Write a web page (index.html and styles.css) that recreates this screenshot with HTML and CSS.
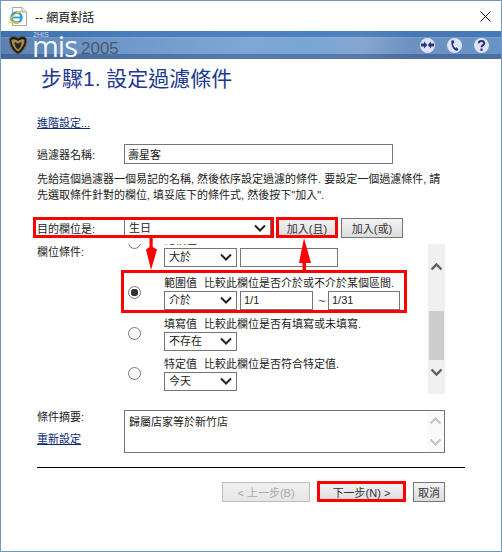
FILE: index.html
```html
<!DOCTYPE html>
<html lang="zh-Hant">
<head>
    <meta charset="UTF-8">
    <title>網頁對話</title>
    <link rel="stylesheet" href="styles.css">
</head>
<body>
    <div class="window">
        <div class="titlebar">
            <svg class="ie-icon" width="18" height="19" viewBox="0 0 18 19">
                <path d="M3.5 .5H13L17.5 5V18.5H3.5Z" fill="#fff" stroke="#a8a8a8"/>
                <path d="M13 .5V5H17.5" fill="#e8e8e8" stroke="#a8a8a8"/>
                <circle cx="7.5" cy="10.5" r="5" fill="none" stroke="#2a9bdc" stroke-width="2.4"/>
                <path d="M3.5 10.5H11.8" stroke="#2a9bdc" stroke-width="1.8"/>
                <path d="M10 14.5C8 16.3 4.5 16 3 14" fill="none" stroke="#f2b61c" stroke-width="2"/>
                <path d="M1 16C.5 12 5 6 12.5 4" fill="none" stroke="#f5c42c" stroke-width="1.3"/>
            </svg>
            <span class="title-text">-- 網頁對話</span>
            <svg class="close-icon" width="11" height="11" viewBox="0 0 11 11">
                <path d="M.5 .5L10.5 10.5M10.5 .5L.5 10.5" stroke="#111" stroke-width="1"/>
            </svg>
        </div>

        <div class="banner">
            <svg class="shield" width="20" height="20" viewBox="0 0 20 20">
                <path d="M1.500 5C1.500 2.500 4 1 6 1.500C7.500 1.800 9 2.500 10 3C11 2.500 12.500 1.800 14 1.500C16 1 18.500 2.500 18.500 5C18.500 11 15 16.500 10 19C5 16.500 1.500 11 1.500 5Z" fill="#1f1a14" stroke="#5d5443"/>
                <path d="M3.500 5C5 3.500 7.500 4.500 10 6C12.500 4.500 15 3.500 16.500 5C16.500 9 14 14 10 16.500C6 14 3.500 9 3.500 5Z" fill="#a48c50"/>
                <path d="M6.500 7C8 7 9 8 10 9C11 8 12 7 13.500 7C13.500 10 12.500 12.500 10 14.500C7.500 12.500 6.500 10 6.500 7Z" fill="#2a241a"/>
            </svg>
            <div class="brand">
                <span class="brand-tag">2HIS</span>
                <span class="brand-name">mis</span>
                <span class="brand-year">2005</span>
            </div>
            <div class="banner-icons">
                <svg class="round-icon" width="15" height="15" viewBox="0 0 15 15">
                    <circle cx="7.500" cy="7.500" r="7.500" fill="#dfe2f4"/>
                    <path d="M1 5.500H4V3.500L7.300 7L4 10.500V8.500H1ZM14 5.500H11V3.500L7.700 7L11 10.500V8.500H14Z" fill="#22357e"/>
                </svg>
                <svg class="round-icon" width="15" height="15" viewBox="0 0 15 15">
                    <circle cx="7.500" cy="7.500" r="7.500" fill="#dfe2f4"/>
                    <path d="M4.500 2.500L6.500 2L7.300 5L6 5.800C6.200 7.500 7 9 8.200 10L9.500 9.300L11.500 11.500L10 13C6.500 12.500 3.500 7 4.500 2.500Z" fill="#22357e"/>
                </svg>
                <svg class="round-icon" width="15" height="15" viewBox="0 0 15 15">
                    <circle cx="7.500" cy="7.500" r="7.500" fill="#dfe2f4"/>
                    <path d="M4.800 5.200C4.800 2.200 10.200 2.200 10.200 5.200C10.200 7.200 7.500 7 7.500 9.300" fill="none" stroke="#22357e" stroke-width="2"/>
                    <rect x="6.400" y="10.600" width="2.200" height="2.200" fill="#22357e"/>
                </svg>
            </div>
        </div>

        <div class="main">
            <h1 class="step-title">步驟1. 設定過濾條件</h1>
            <a class="link advanced" href="#">進階設定...</a>

            <div class="form-row name-row">
                <label>過濾器名稱:</label>
                <input class="text-input name-input" type="text" value="壽星客">
            </div>

            <p class="help">先給這個過濾器一個易記的名稱, 然後依序設定過濾的條件. 要設定一個過濾條件, 請<br>先選取條件針對的欄位, 填妥底下的條件式, 然後按下"加入".</p>

            <div class="form-row target-row">
                <label>目的欄位是:</label>
                <div class="target-controls">
                    <select class="select target-select"><option>生日</option></select>
                    <button class="btn add-btn">加入(且)</button>
                    <button class="btn add-btn">加入(或)</button>
                </div>
            </div>

            <div class="form-row cond-row">
                <label>欄位條件:</label>
                <div class="cond-box">
                    <div class="cond-list">
                        <div class="option option-first">
                            <input class="radio" type="radio" name="cond">
                            <div class="option-body">
                                <div class="option-title">比較值</div>
                                <div class="option-fields">
                                    <select class="select op-select"><option>大於</option></select>
                                    <input class="text-input wide-input" type="text">
                                </div>
                            </div>
                        </div>
                        <div class="option option-range">
                            <input class="radio" type="radio" name="cond" checked>
                            <div class="option-body">
                                <div class="option-title"><span class="kind">範圍值</span>比較此欄位是否介於或不介於某個區間.</div>
                                <div class="option-fields">
                                    <select class="select op-select"><option>介於</option></select>
                                    <input class="text-input range-input" type="text" value="1/1">
                                    <span class="tilde">~</span>
                                    <input class="text-input range-input" type="text" value="1/31">
                                </div>
                            </div>
                        </div>
                        <div class="option">
                            <input class="radio" type="radio" name="cond">
                            <div class="option-body">
                                <div class="option-title"><span class="kind">填寫值</span>比較此欄位是否有填寫或未填寫.</div>
                                <div class="option-fields">
                                    <select class="select op-select"><option>不存在</option></select>
                                </div>
                            </div>
                        </div>
                        <div class="option option-last">
                            <input class="radio" type="radio" name="cond">
                            <div class="option-body">
                                <div class="option-title"><span class="kind">特定值</span>比較此欄位是否符合特定值.</div>
                                <div class="option-fields">
                                    <select class="select op-select"><option>今天</option></select>
                                </div>
                            </div>
                        </div>
                    </div>
                    <div class="scrollbar">
                        <svg class="chevron" width="13" height="9" viewBox="0 0 13 9"><path d="M1.500 7.500L6.500 2.500L11.500 7.500" fill="none" stroke="#606060" stroke-width="2.400"/></svg>
                        <div class="thumb"></div>
                        <svg class="chevron" width="13" height="9" viewBox="0 0 13 9"><path d="M1.500 1.500L6.500 6.500L11.500 1.500" fill="none" stroke="#606060" stroke-width="2.400"/></svg>
                    </div>
                </div>
            </div>

            <div class="form-row summary-row">
                <div class="summary-side">
                    <label>條件摘要:</label>
                    <a class="link" href="#">重新設定</a>
                </div>
                <div class="summary-box">
                    <div class="summary-text">歸屬店家等於新竹店</div>
                    <div class="summary-bar">
                        <svg width="13" height="9" viewBox="0 0 13 9"><path d="M1.500 7.500L6.500 2.500L11.500 7.500" fill="none" stroke="#c8c8c8" stroke-width="2.400"/></svg>
                        <svg width="13" height="9" viewBox="0 0 13 9"><path d="M1.500 1.500L6.500 6.500L11.500 1.500" fill="none" stroke="#c8c8c8" stroke-width="2.400"/></svg>
                    </div>
                </div>
            </div>

            <hr class="rule">

            <div class="footer">
                <button class="btn wizard-btn" disabled>&lt; 上一步(B)</button>
                <button class="btn wizard-btn">下一步(N) &gt;</button>
                <button class="btn cancel-btn">取消</button>
            </div>
        </div>

        <!-- red callouts drawn over the dialog -->
        <svg class="callouts" width="502" height="552" viewBox="0 0 502 552">
            <g fill="none" stroke="#f00" stroke-width="3">
                <rect x="34.500" y="218.500" width="238" height="18"/>
                <rect x="277.500" y="218.500" width="59" height="18"/>
                <rect x="122.500" y="271.500" width="283" height="40"/>
                <rect x="318.500" y="482.500" width="86" height="18"/>
            </g>
            <path d="M149.500 237H152.700V247L157 249.500L151 270L146 249.500L149.500 247Z" fill="#f00"/>
            <path d="M302.500 271V263H299L304 238L311 263H306V271Z" fill="#f00"/>
        </svg>
    </div>
</body>
</html>
```

FILE: styles.css
```css
* {
    box-sizing: border-box;
}
body {
    margin: 0;
    background-color: #fff;
    color: #222;
    font-family: "Liberation Sans", "Noto Sans CJK TC", sans-serif;
    font-size: 11px;
}
.window {
    position: relative;
    width: 502px;
    height: 552px;
    border: 1px solid #6f9ac4;
    overflow: hidden;
}
.titlebar {
    display: flex;
    align-items: center;
    height: 30px;
    padding-left: 8px;
    padding-right: 10px;
}
.title-text {
    margin-left: 8px;
    color: #111;
    font-size: 12px;
}
.close-icon {
    margin-left: auto;
}
.banner {
    display: flex;
    align-items: center;
    height: 28px;
    padding-left: 7px;
    padding-right: 12px;
    background:
        linear-gradient(180deg, rgba(40, 100, 175, .55) 0, rgba(40, 100, 175, .55) 6px, rgba(255, 255, 255, .12) 6px, rgba(255, 255, 255, 0) 8px, rgba(0, 0, 0, 0) 23px, rgba(40, 65, 120, .45) 23px),
        linear-gradient(100deg, #5c80ad 0, #6d96c8 20%, #7ea6d6 50%, #79a6d6 62%, #86a6cf 72%, #6c90c0 82%, #6a94c6 100%);
}
.brand {
    position: relative;
    display: flex;
    align-items: flex-end;
    height: 28px;
    margin-left: 4px;
}
.brand-tag {
    position: absolute;
    top: 0;
    left: 1px;
    color: #cfdcec;
    font-size: 7px;
    line-height: 7px;
}
.brand-name {
    margin-bottom: 3px;
    color: #f4f7fb;
    font-family: "Open Sans", sans-serif;
    font-size: 29px;
    font-weight: 400;
    line-height: 20px;
    letter-spacing: -1px;
}
.brand-year {
    margin-left: 4px;
    margin-bottom: 2px;
    color: #4c5868;
    font-size: 17px;
    line-height: 17px;
}
.banner-icons {
    display: flex;
    gap: 12px;
    margin-left: auto;
}
.main {
    padding-left: 36px;
}
.step-title {
    margin: 8px 0 0 4px;
    color: #21398f;
    font-size: 21px;
    font-weight: normal;
    line-height: 24px;
}
.link {
    display: block;
    color: #0c2a78;
    line-height: 16px;
    text-decoration: underline;
}
.advanced {
    margin-top: 24px;
}
.form-row {
    display: grid;
    grid-template-columns: 87px 321px;
}
.name-row {
    align-items: center;
    margin-top: 13px;
}
.text-input {
    height: 20px;
    padding: 0 3px;
    border: 1px solid #767676;
    color: #222;
    font-family: inherit;
    font-size: 11px;
}
.name-input {
    width: 269px;
}
.help {
    margin: 7px 0 0;
    line-height: 16px;
}
.target-row {
    align-items: center;
    margin-top: 15px;
}
.target-controls {
    display: flex;
}
.select {
    height: 20px;
    padding: 0 0 0 4px;
    border: 1px solid #767676;
    border-radius: 0;
    appearance: none;
    background: #fff url("data:image/svg+xml,%3Csvg xmlns='http://www.w3.org/2000/svg' width='12' height='8'%3E%3Cpath d='M1 1.500L6 6.500L11 1.500' fill='none' stroke='%23222' stroke-width='2'/%3E%3C/svg%3E") no-repeat right 4px center;
    color: #222;
    font-family: inherit;
    font-size: 11px;
}
.target-select {
    width: 147px;
    margin-right: 5px;
}
.btn {
    height: 20px;
    padding: 0;
    border: 1px solid #767676;
    background: linear-gradient(180deg, #f3f3f3, #dcdcdc);
    color: #333;
    font-family: inherit;
    font-size: 11px;
}
.add-btn {
    width: 62px;
    margin-right: 3px;
}
.cond-row {
    margin-top: 6px;
    height: 150px;
}
.cond-row label {
    line-height: 16px;
}
.cond-box {
    display: flex;
    height: 150px;
}
.cond-list {
    flex: 1;
    overflow: hidden;
}
.option {
    display: flex;
    align-items: center;
    height: 35px;
    margin-bottom: 6px;
}
.option-first {
    margin-top: -12px;
    margin-bottom: 8px;
}
.option-first .radio {
    margin-top: -14px;
}
.option-last {
    margin-top: -1px;
}
.radio {
    flex: none;
    width: 13px;
    height: 13px;
    margin: 0 23px 0 4px;
    border: 1px solid #767676;
    border-radius: 50%;
    appearance: none;
    background: #fff;
}
.radio:checked {
    background: radial-gradient(circle, #333 0, #333 3.5px, #fff 4px);
}
.option-title {
    height: 15px;
    line-height: 15px;
    white-space: nowrap;
}
.kind {
    margin-right: 7px;
}
.option-fields {
    display: flex;
    align-items: center;
}
.option-fields .select {
    height: 19px;
}
.op-select {
    width: 73px;
}
.option-fields .text-input {
    height: 19px;
    margin-left: 3px;
}
.wide-input {
    width: 98px;
}
.range-input {
    width: 73px;
}
.tilde {
    width: 12px;
    margin-left: 3px;
    color: #555;
    font-size: 13px;
    text-align: center;
}
.option-fields .tilde + .range-input {
    margin-left: 0;
    width: 72px;
}
.scrollbar {
    display: flex;
    flex: none;
    flex-direction: column;
    align-items: center;
    width: 17px;
    height: 150px;
    padding-top: 18px;
    background-color: #f0f0f0;
}
.thumb {
    width: 15px;
    height: 49px;
    margin-top: 40px;
    margin-bottom: 8px;
    background-color: #cdcdcd;
}
.summary-row {
    margin-top: 16px;
}
.summary-side label {
    display: block;
    line-height: 16px;
    margin-bottom: 6px;
    margin-top: -1px;
}
.summary-box {
    display: flex;
    height: 43px;
    border: 1px solid #767676;
}
.summary-text {
    flex: 1;
    padding: 3px 4px;
    line-height: 16px;
}
.summary-bar {
    display: flex;
    flex-direction: column;
    align-items: center;
    justify-content: space-between;
    width: 17px;
    padding: 5px 0;
    background-color: #fafafa;
}
.rule {
    width: 428px;
    height: 1px;
    margin: 14px 0 0;
    border: 0;
    background-color: #000;
}
.footer {
    display: flex;
    justify-content: flex-end;
    gap: 7px;
    width: 408px;
    margin-top: 14px;
}
.wizard-btn {
    width: 88px;
}
.wizard-btn + .wizard-btn {
    width: 89px;
}
.cancel-btn {
    width: 32px;
}
.btn:disabled {
    border-color: #bcbcbc;
    background: linear-gradient(180deg, #f0f0f0, #e6e6e6);
    color: #a8a8a8;
}
.callouts {
    position: absolute;
    top: -1px;
    left: -1px;
    pointer-events: none;
}
```
